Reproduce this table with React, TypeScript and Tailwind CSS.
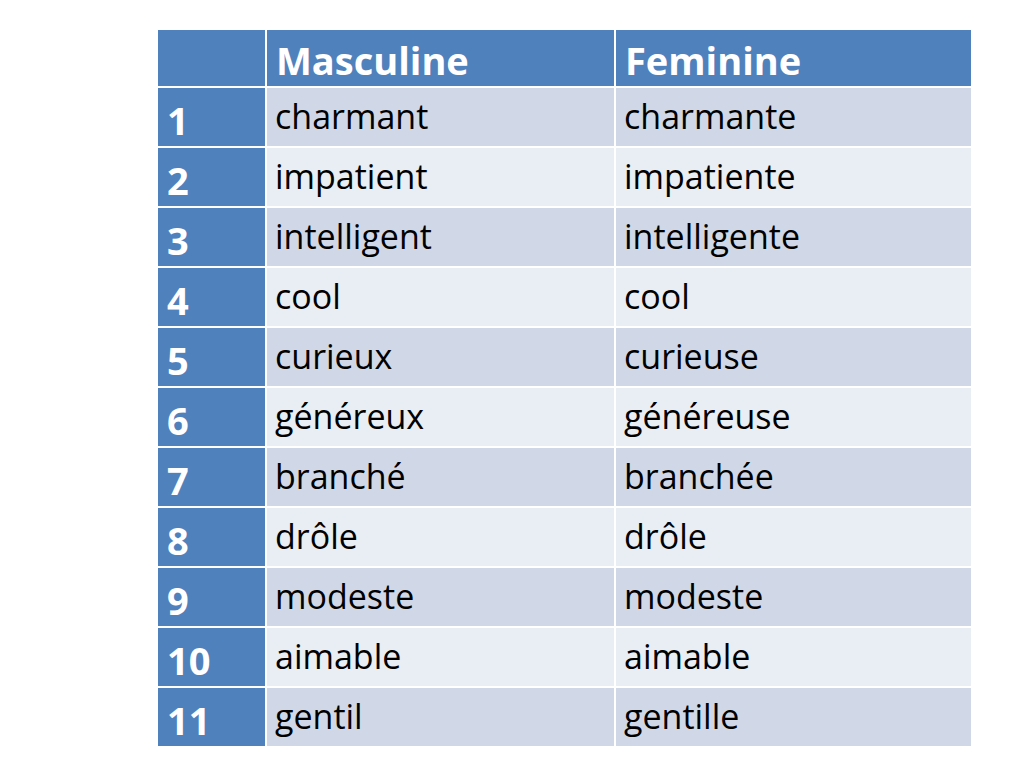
import React from 'react';

const rows: [string, string][] = [
  ['charmant', 'charmante'],
  ['impatient', 'impatiente'],
  ['intelligent', 'intelligente'],
  ['cool', 'cool'],
  ['curieux', 'curieuse'],
  ['généreux', 'généreuse'],
  ['branché', 'branchée'],
  ['drôle', 'drôle'],
  ['modeste', 'modeste'],
  ['aimable', 'aimable'],
  ['gentil', 'gentille'],
];

const App: React.FC = () => {
  return (
    <div className="w-[1024px] h-[768px] bg-white pt-[30px] pl-[158px]" style={{ fontFamily: '"Open Sans", sans-serif' }}>
      <div className="grid w-[813px] grid-cols-[107px_347px_355px] gap-[2px] auto-rows-[58px] grid-rows-[56px]">
        <div className="bg-[#4f81bd]" />
        <div className="bg-[#4f81bd] pl-[9px] pt-[8px] text-[38px] font-bold leading-[44px] text-white">Masculine</div>
        <div className="bg-[#4f81bd] pl-[9px] pt-[8px] text-[38px] font-bold leading-[44px] text-white">Feminine</div>
        {rows.map(([masc, fem], i) => {
          const bg = i % 2 === 0 ? 'bg-[#d0d8e8]' : 'bg-[#e9edf4]';
          return (
            <React.Fragment key={i}>
              <div className="bg-[#4f81bd] pl-[9px] pt-[10px] text-[38px] font-bold leading-[44px] text-white">{i + 1}</div>
              <div className={`${bg} pl-[8px] pt-[6px] text-[34px] leading-[44px] text-black`}>{masc}</div>
              <div className={`${bg} pl-[8px] pt-[6px] text-[34px] leading-[44px] text-black`}>{fem}</div>
            </React.Fragment>
          );
        })}
      </div>
    </div>
  );
};

export default App;
